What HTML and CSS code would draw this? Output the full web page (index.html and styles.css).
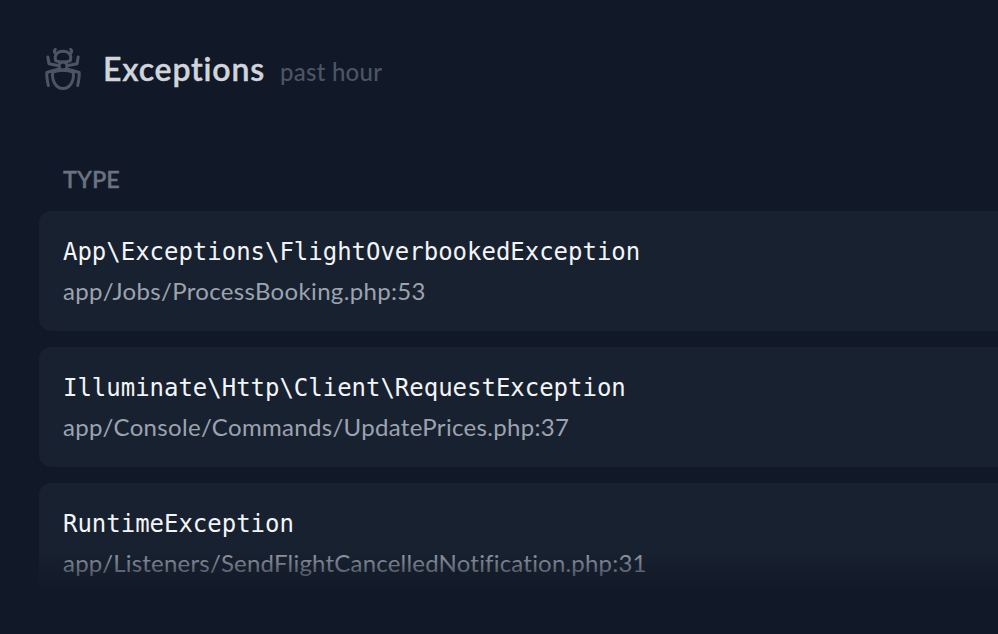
FILE: index.html
```html
<!DOCTYPE html>
<html lang="en">
<head>
<meta charset="utf-8">
<title>Exceptions</title>
<link rel="stylesheet" href="styles.css">
</head>
<body>
<section class="card">
  <header class="card-header">
    <svg class="icon" viewBox="0 0 48 48" fill="none" stroke="currentColor" stroke-width="3" stroke-linecap="round" stroke-linejoin="round">
      <path d="M16.300 4.300C14.600 5.800 15.200 7.800 17.500 9M31.700 4.300C33.400 5.800 32.800 7.800 30.500 9"/>
      <path d="M16.800 15.800C14.800 9.500 18.500 6.200 24 6.200S33.200 9.500 31.200 15.800C27 17.200 21 17.200 16.800 15.800Z"/>
      <circle cx="24" cy="21" r="4"/>
      <path d="M8.800 12L10 18.800L20 20.800M39.200 12L38 18.800L28 20.800"/>
      <path d="M20.500 24C16 25 12 26 7.800 27.500C7.500 32 8.300 36 9.300 40.500M27.500 24C32 25 36 26 40.200 27.500C40.500 32 39.700 36 38.700 40.500"/>
      <path d="M13.800 27C20 24.800 28 24.800 34.200 27C35.500 35 31.500 43.500 24 43.500S12.500 35 13.800 27Z"/>
    </svg>
    <h1 class="title">Exceptions</h1>
    <span class="period">past hour</span>
  </header>
  <div class="viewport">
    <div class="column-label">Type</div>
    <ul class="rows">
      <li class="row">
        <code class="name">App\Exceptions\FlightOverbookedException</code>
        <p class="location location-booking">app/Jobs/ProcessBooking.php:53</p>
      </li>
      <li class="row">
        <code class="name">Illuminate\Http\Client\RequestException</code>
        <p class="location location-prices">app/Console/Commands/UpdatePrices.php:37</p>
      </li>
      <li class="row">
        <code class="name">RuntimeException</code>
        <p class="location location-listener">app/Listeners/SendFlightCancelledNotification.php:31</p>
      </li>
    </ul>
    <div class="fade"></div>
  </div>
</section>
</body>
</html>
```
FILE: styles.css
```css
* { box-sizing: border-box; margin: 0; padding: 0; }

body {
  height: 634px;
  overflow: hidden;
  background: #111827;
  font-family: Lato, "Open Sans", sans-serif;
  font-variant-ligatures: none;
  -webkit-font-smoothing: antialiased;
}

.card {
  height: 634px;
  padding: 45px 0 0 39px;
}

.card-header {
  display: flex;
  align-items: center;
  height: 48px;
}

.icon { width: 48px; height: 48px; color: #4b5563; }

.title {
  width: 161px;
  margin-left: 16px;
  padding-bottom: 1px;
  color: #d1d5db;
  font-size: 32px;
  font-weight: 600;
  letter-spacing: 0.82px;
  line-height: 47px;
  -webkit-text-stroke: 0.4px currentColor;
}

.period {
  margin-left: 16px;
  padding-top: 6px;
  color: #4b5563;
  font-size: 24px;
  font-weight: 500;
  letter-spacing: 0.25px;
  line-height: 32px;
}

.viewport {
  position: relative;
  height: 497px;
  padding-top: 71px;
  overflow: hidden;
}

.column-label {
  height: 47px;
  padding-left: 24px;
  color: #6b7280;
  font-size: 23.5px;
  font-weight: 600;
  line-height: 31px;
  text-transform: uppercase;
  -webkit-text-stroke: 0.3px currentColor;
}

.rows { display: grid; gap: 16px; list-style: none; }

.row {
  height: 120px;
  padding: 25px 24px 23px;
  border-radius: 12px 0 0 12px;
  background: #18212f;
  white-space: nowrap;
}

.name {
  display: block;
  color: #f3f4f6;
  font: 24px/32px "DejaVu Sans Mono", monospace;
  letter-spacing: -0.02px;
}

.location {
  margin-top: 7px;
  color: #9ca3af;
  font-size: 24px;
  line-height: 32px;
}

.location-booking { letter-spacing: 0.34px; }
.location-prices { letter-spacing: 0.32px; }
.location-listener { letter-spacing: 0.2px; }

.fade {
  position: absolute;
  left: 0;
  right: 0;
  bottom: -6px;
  height: 46px;
  background: linear-gradient(to bottom, rgba(17, 24, 39, 0), #111827);
}
```
